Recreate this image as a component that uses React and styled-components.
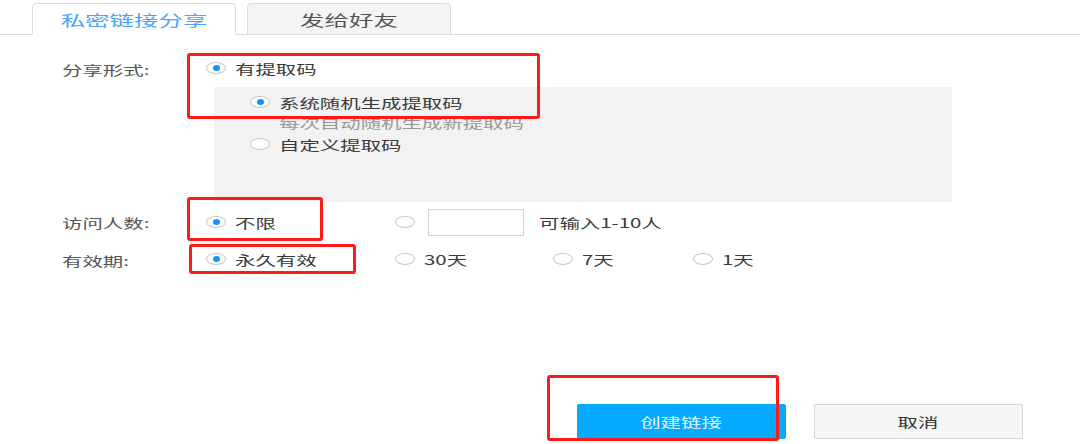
import React from 'react';
import styled, { createGlobalStyle } from 'styled-components';

const Global = createGlobalStyle`
    html, body {
        margin: 0;
        padding: 0;
        background: #fff;
    }
    body {
        font-family: "Noto Sans CJK SC", "Liberation Sans", sans-serif;
        color: #444;
    }
`;

const App = () => {

    return (
        <Page>
            <Global />

            <TabBar>
                <Tab active><Wide center big>私密链接分享</Wide></Tab>
                <Tab><Wide center big>发给好友</Wide></Tab>
            </TabBar>

            <Form>
                <Row>
                    <Label><Wide>分享形式:</Wide></Label>
                    <Column>
                        <Option checked>有提取码</Option>
                        <Panel>
                            <Option checked small>系统随机生成提取码</Option>
                            <Hint><Wide>每次自动随机生成新提取码</Wide></Hint>
                            <Option small>自定义提取码</Option>
                        </Panel>
                    </Column>
                </Row>

                <Row tall>
                    <Label><Wide>访问人数:</Wide></Label>
                    <Option checked w={189}>不限</Option>
                    <Option extra={<Count />}>可输入1-10人</Option>
                </Row>

                <Row gap={10}>
                    <Label><Wide>有效期:</Wide></Label>
                    <Option checked w={189}>永久有效</Option>
                    <Option w={158}>30天</Option>
                    <Option w={140}>7天</Option>
                    <Option>1天</Option>
                </Row>

                <Actions>
                    <Button primary><Wide center>创建链接</Wide></Button>
                    <Button><Wide center>取消</Wide></Button>
                </Actions>
            </Form>

            <Mark x={187} y={53} w={353} h={66} />
            <Mark x={187} y={197} w={136} h={44} />
            <Mark x={189} y={244} w={167} h={30} />
            <Mark x={547} y={375} w={232} h={66} />
        </Page>
    )
}

const Option = ({ checked, w, small, extra, children }) => (
    <Choice w={w} small={small}>
        <Radio checked={checked} />
        {extra}
        <Wide>{children}</Wide>
    </Choice>
);

const Page = styled.div`
    position: relative;
    width: 1080px;
    height: 444px;
    overflow: hidden;
`;

/* the screenshot is stretched sideways, so text is widened the same way */
const Wide = styled.span`
    display: inline-block;
    white-space: nowrap;
    font-size: ${p => p.big ? '15px' : '13px'};
    transform: scaleX(${p => p.big ? 1.63 : 1.57});
    transform-origin: ${p => p.center ? 'center' : 'left'} center;
`;

const TabBar = styled.div`
    display: flex;
    align-items: flex-end;
    gap: 11px;
    height: 35px;
    box-sizing: border-box;
    padding: 3px 0 0 32px;
    border-bottom: 1px solid #dcdcdc;
`;

const Tab = styled.div`
    width: 204px;
    height: 32px;
    box-sizing: border-box;
    margin-bottom: -1px;
    display: flex;
    align-items: center;
    justify-content: center;
    border: 1px solid #dcdcdc;
    border-radius: 4px 4px 0 0;
    color: ${p => p.active ? '#45a6ff' : '#555'};
    background: ${p => p.active ? '#fff' : '#f4f4f4'};
    border-bottom-color: ${p => p.active ? '#fff' : '#dcdcdc'};
`;

const Form = styled.div`
    display: flex;
    flex-direction: column;
    padding: 21px 0 0 62px;
`;

const Row = styled.div`
    display: flex;
    align-items: ${p => p.tall ? 'center' : 'flex-start'};
    min-height: ${p => p.tall ? '30px' : '24px'};
    margin-top: ${p => p.gap || 5}px;
    &:first-child {
        margin-top: 0;
    }
`;

const Label = styled.div`
    width: 144px;
    flex-shrink: 0;
    line-height: 24px;
    color: #555;
`;

const Column = styled.div`
    display: flex;
    flex-direction: column;
`;

const Choice = styled.div`
    display: flex;
    align-items: center;
    width: ${p => p.w ? `${p.w}px` : 'auto'};
    height: ${p => p.small ? '20px' : '24px'};
    color: #3a3a3a;
    white-space: nowrap;
`;

const Radio = styled.span`
    position: relative;
    flex-shrink: 0;
    width: 20px;
    height: 12px;
    margin-right: 9px;
    box-sizing: border-box;
    border: 1px solid #c4c4c4;
    border-radius: 50%;
    background: #fff;
    &::after {
        content: "";
        display: ${p => p.checked ? 'block' : 'none'};
        position: absolute;
        left: 6px;
        top: 2px;
        width: 7px;
        height: 6px;
        border-radius: 50%;
        background: #1a90ff;
    }
`;

const Panel = styled.div`
    width: 738px;
    height: 115px;
    box-sizing: border-box;
    margin: 7px 0 0 8px;
    padding: 5px 0 0 36px;
    background: #f2f2f2;
    display: flex;
    flex-direction: column;
`;

const Hint = styled.div`
    padding-left: 29px;
    margin-bottom: 2px;
    line-height: 18px;
    color: #999;
`;

const Count = styled.span`
    flex-shrink: 0;
    width: 96px;
    height: 27px;
    box-sizing: border-box;
    margin: 0 15px 0 4px;
    border: 1px solid #c9d5e3;
    background: #fff;
`;

const Actions = styled.div`
    display: flex;
    gap: 28px;
    margin: 131px 0 0 515px;
`;

const Button = styled.div`
    width: 209px;
    height: 35px;
    box-sizing: border-box;
    display: flex;
    align-items: center;
    justify-content: center;
    border-radius: 2px;
    color: ${p => p.primary ? '#e3f5ff' : '#333'};
    background: ${p => p.primary ? '#05aaff' : '#f5f5f5'};
    border: 1px solid ${p => p.primary ? '#05aaff' : '#d6d6d6'};
`;

const Mark = styled.div`
    position: absolute;
    left: ${p => p.x}px;
    top: ${p => p.y}px;
    width: ${p => p.w}px;
    height: ${p => p.h}px;
    box-sizing: border-box;
    border: 3px solid #fb1b1b;
    border-radius: 3px;
    pointer-events: none;
`;

export default App;
